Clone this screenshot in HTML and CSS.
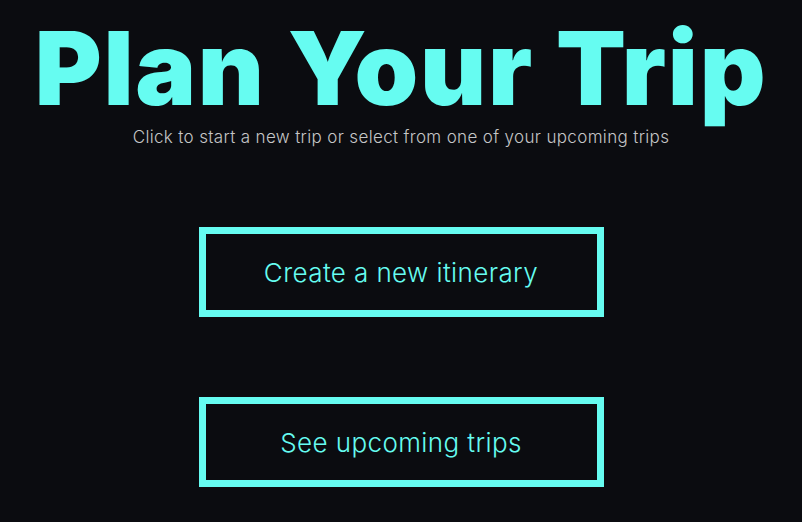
FILE: index.html
```html
<!DOCTYPE html>
<html>
<head>
<meta charset="utf-8">
<link rel="stylesheet" href="styles.css">
</head>
<body>
<main class="page">
  <header class="hero">
    <h1 class="title">Plan Your Trip</h1>
    <p class="subtitle">Click to start a new trip or select from one of your upcoming trips</p>
  </header>
  <nav class="actions">
    <a class="action" href="#">Create a new itinerary</a>
    <a class="action" href="#">See upcoming trips</a>
  </nav>
</main>
</body>
</html>
```
FILE: styles.css
```css
html, body {
  margin: 0;
  padding: 0;
  background: #0b0c10;
  height: 100%;
}
.page {
  display: flex;
  flex-direction: column;
  align-items: center;
  font-family: Inter, Lato, sans-serif;
}
.hero {
  display: flex;
  flex-direction: column;
  align-items: center;
}
.title {
  margin: 0;
  padding-top: 12px;
  font-size: 102px;
  font-weight: 900;
  line-height: 112px;
  color: #66fcf1;
  letter-spacing: 1.7px;
  white-space: nowrap;
}
.subtitle {
  margin: 3px 0 0;
  font-size: 17px;
  font-weight: 300;
  color: #c5c6c7;
  line-height: 20px;
  letter-spacing: 0.35px;
  white-space: nowrap;
}
.actions {
  display: flex;
  flex-direction: column;
  align-items: center;
  gap: 80px;
  margin-top: 80px;
}
.action {
  box-sizing: border-box;
  width: 405px;
  height: 90px;
  border: 7px solid #66fcf1;
  display: flex;
  align-items: center;
  justify-content: center;
  color: #66fcf1;
  font-size: 26px;
  font-weight: 300;
  letter-spacing: 0.4px;
  text-decoration: none;
}
```
